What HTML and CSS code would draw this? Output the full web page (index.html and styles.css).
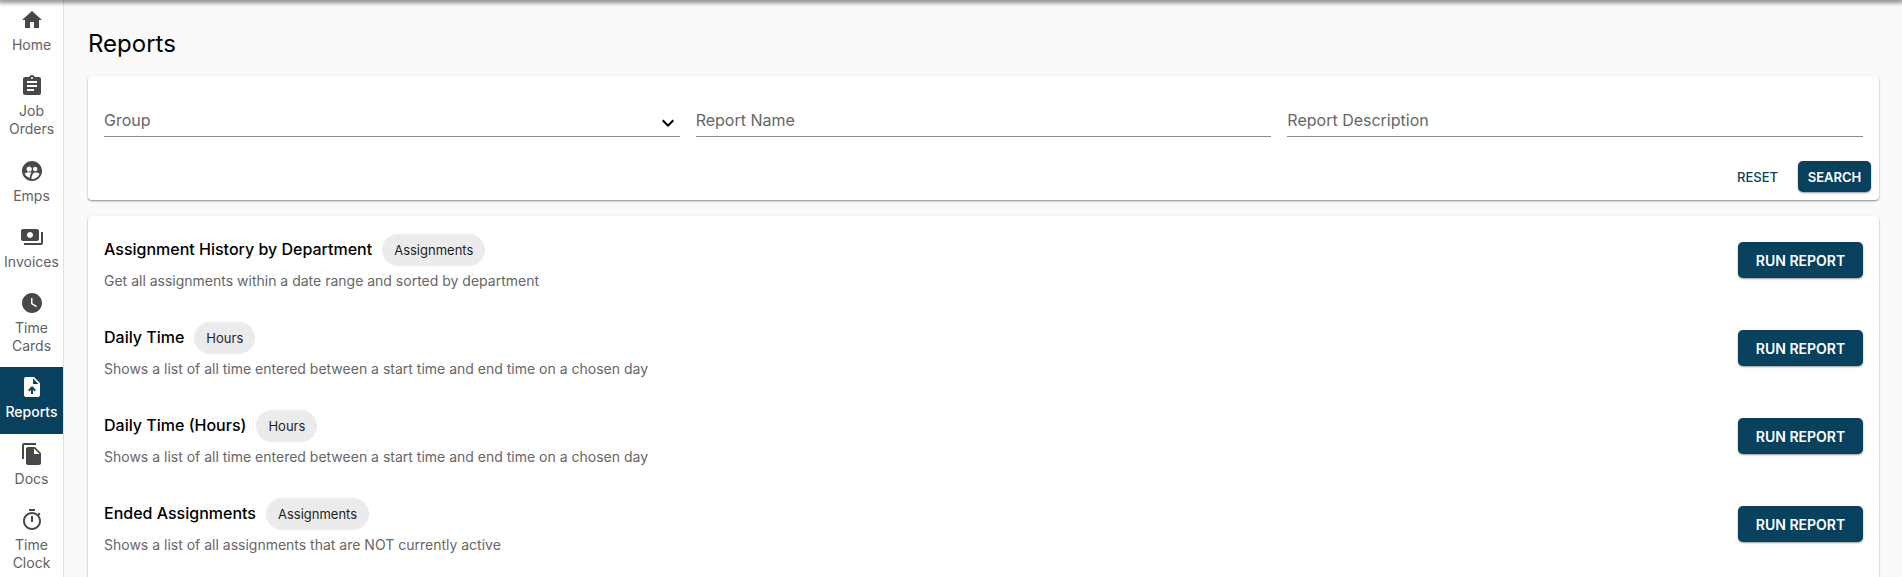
FILE: index.html
```html
<!DOCTYPE html>
<html lang="en">
<head>
    <meta charset="UTF-8">
    <title>Reports</title>
    <link rel="stylesheet" href="styles.css">
</head>
<body>
    <div class="layout">
        <nav class="sidebar">
            <a class="nav-item">
                <svg viewBox="0 0 24 24"><path d="M10 20v-6h4v6h5v-8h3L12 3 2 12h3v8z"/></svg>
                <span>Home</span>
            </a>
            <a class="nav-item">
                <svg viewBox="0 0 24 24"><path d="M19 3h-4.180C14.400 1.840 13.300 1 12 1c-1.300 0-2.400.84-2.820 2H5c-1.100 0-2 .9-2 2v14c0 1.100.9 2 2 2h14c1.100 0 2-.9 2-2V5c0-1.100-.9-2-2-2zm-7 0c.55 0 1 .45 1 1s-.45 1-1 1-1-.45-1-1 .45-1 1-1zm2 14H7v-2h7v2zm3-4H7v-2h10v2zm0-4H7V7h10v2z"/></svg>
                <span>Job Orders</span>
            </a>
            <a class="nav-item">
                <svg viewBox="0 0 24 24"><path fill-rule="evenodd" d="M12 2C6.480 2 2 6.480 2 12s4.480 10 10 10 10-4.480 10-10S17.520 2 12 2zM9.200 7.400a2.600 2.600 0 1 1 0 5.200 2.600 2.600 0 0 1 0-5.200zm6 .4a2.200 2.200 0 1 1 0 4.400 2.200 2.200 0 0 1 0-4.400zM4.600 14.800c1-1 2.700-1.500 4.600-1.500.8 0 1.600.1 2.300.4-1 1.400-1.600 3.100-1.800 5.400-2.300-.8-4.200-2.400-5.100-4.300zM12 20c-.2 0-.4 0-.6 0 .1-2.600.9-4.700 2.300-6.200 2.200-.6 4.600-.2 5.900.9-1.100 3.100-4 5.300-7.600 5.300z"/></svg>
                <span>Emps</span>
            </a>
            <a class="nav-item">
                <svg viewBox="0 0 24 24"><path d="M19 14V6c0-1.100-.9-2-2-2H3c-1.100 0-2 .9-2 2v8c0 1.100.9 2 2 2h14c1.100 0 2-.9 2-2zm-9-1c-1.660 0-3-1.340-3-3s1.340-3 3-3 3 1.340 3 3-1.340 3-3 3zm13-6v11c0 1.100-.9 2-2 2H4v-2h17V7h2z"/></svg>
                <span>Invoices</span>
            </a>
            <a class="nav-item">
                <svg viewBox="0 0 24 24"><path d="M12 2C6.500 2 2 6.500 2 12s4.500 10 10 10 10-4.500 10-10S17.500 2 12 2zm4.200 14.200L11 13V7h1.500v5.200l4.500 2.700-.8 1.300z"/></svg>
                <span>Time Cards</span>
            </a>
            <a class="nav-item active">
                <svg viewBox="0 0 24 24"><path fill-rule="evenodd" d="M14 2H6c-1.100 0-2 .9-2 2v16c0 1.100.9 2 2 2h12c1.100 0 2-.9 2-2V8l-6-6zm-1 7V3.500L18.500 9H13zm-5 6.010l1.410 1.410L11 14.840V19h2v-4.160l1.590 1.590L16 15.010 12.010 11 8 15.010z"/></svg>
                <span>Reports</span>
            </a>
            <a class="nav-item">
                <svg viewBox="0 0 24 24"><path d="M16 1H4c-1.100 0-2 .9-2 2v14h2V3h12V1zm-1 4l6 6v10c0 1.100-.9 2-2 2H7.990C6.890 23 6 22.100 6 21l.01-14c0-1.100.89-2 1.990-2h7zm-1 7h5.500L14 6.500V12z"/></svg>
                <span>Docs</span>
            </a>
            <a class="nav-item">
                <svg viewBox="0 0 24 24"><path d="M15 1H9v2h6V1zm-4 13h2V8h-2v6zm8.030-6.610l1.420-1.420c-.43-.51-.9-.99-1.410-1.410l-1.420 1.420C16.070 4.740 14.120 4 12 4c-4.970 0-9 4.030-9 9s4.020 9 9 9 9-4.030 9-9c0-2.120-.74-4.070-1.970-5.610zM12 20c-3.870 0-7-3.130-7-7s3.130-7 7-7 7 3.130 7 7-3.130 7-7 7z"/></svg>
                <span>Time Clock</span>
            </a>
        </nav>

        <main class="content">
            <h1>Reports</h1>

            <section class="card filters">
                <div class="filter-row">
                    <div class="field">
                        <span>Group</span>
                        <svg class="chevron" viewBox="0 0 24 24"><path d="M16.590 8.590L12 13.170 7.410 8.590 6 10l6 6 6-6z"/></svg>
                    </div>
                    <div class="field"><span>Report Name</span></div>
                    <div class="field"><span>Report Description</span></div>
                </div>
                <div class="filter-actions">
                    <button class="btn-text">RESET</button>
                    <button class="btn-small">SEARCH</button>
                </div>
            </section>

            <section class="card report-list">
                <div class="report">
                    <div class="report-info">
                        <div class="report-title"><span class="title-text">Assignment History by Department</span> <span class="chip">Assignments</span></div>
                        <div class="report-desc">Get all assignments within a date range and sorted by department</div>
                    </div>
                    <button class="btn-run">RUN REPORT</button>
                </div>
                <div class="report">
                    <div class="report-info">
                        <div class="report-title"><span class="title-text">Daily Time</span> <span class="chip">Hours</span></div>
                        <div class="report-desc">Shows a list of all time entered between a start time and end time on a chosen day</div>
                    </div>
                    <button class="btn-run">RUN REPORT</button>
                </div>
                <div class="report">
                    <div class="report-info">
                        <div class="report-title"><span class="title-text">Daily Time (Hours)</span> <span class="chip">Hours</span></div>
                        <div class="report-desc">Shows a list of all time entered between a start time and end time on a chosen day</div>
                    </div>
                    <button class="btn-run">RUN REPORT</button>
                </div>
                <div class="report">
                    <div class="report-info">
                        <div class="report-title"><span class="title-text">Ended Assignments</span> <span class="chip">Assignments</span></div>
                        <div class="report-desc">Shows a list of all assignments that are NOT currently active</div>
                    </div>
                    <button class="btn-run">RUN REPORT</button>
                </div>
            </section>
        </main>
    </div>
    <div class="top-shadow"></div>
</body>
</html>
```

FILE: styles.css
```css
html, body {
    height: 100%;
}

body {
    margin: 0;
    font-family: Inter, "Liberation Sans", sans-serif;
    background-color: #fafafa;
    overflow: hidden;
}

/* collapsed app bar, only its shadow is visible */
.top-shadow {
    position: absolute;
    top: 0;
    left: 0;
    right: 0;
    height: 0;
    box-shadow: 0 0 5px 2px rgba(0, 0, 0, 0.65);
}

.layout {
    display: flex;
    height: 100%;
    overflow: hidden;
}

.sidebar {
    width: 63px;
    flex-shrink: 0;
    background-color: #fff;
    border-right: 1px solid #e0e0e0;
    overflow: hidden;
}

.nav-item {
    display: flex;
    flex-direction: column;
    align-items: center;
    padding: 8px 0 12px;
    color: #616161;
    font-size: 14px;
    line-height: 1.3;
    text-align: center;
}

.nav-item svg {
    width: 24px;
    height: 24px;
    fill: #484848;
    margin-bottom: 4px;
}

.nav-item span {
    width: 60px;
}

.nav-item.active {
    background-color: #07415e;
    color: #fff;
    font-weight: 500;
}

.nav-item.active svg {
    fill: #fff;
}

.content {
    flex: 1;
    display: flex;
    flex-direction: column;
    padding: 0 23px 0 24px;
}

h1 {
    margin: 0;
    padding-top: 29px;
    height: 47px;
    font-size: 24px;
    line-height: 30px;
    font-weight: 400;
    color: #000;
}

.card {
    background-color: #fff;
    border-radius: 4px;
    box-shadow: 0 1px 2px rgba(0, 0, 0, 0.45);
}

.filters {
    height: 124px;
    flex-shrink: 0;
    box-sizing: border-box;
    padding: 24px 8px 8px 16px;
    margin-bottom: 16px;
}

.filter-row {
    display: flex;
    gap: 16px;
    padding-right: 8px;
}

.field {
    flex: 1;
    height: 37px;
    display: flex;
    align-items: center;
    justify-content: space-between;
    box-sizing: border-box;
    padding-top: 4px;
    border-bottom: 1px solid #8c8c8c;
    color: #666;
    font-size: 16px;
}

.chevron {
    width: 24px;
    height: 24px;
    margin-top: 5px;
}

.filter-actions {
    display: flex;
    justify-content: flex-end;
    align-items: center;
    gap: 10px;
    margin-top: 24px;
}

button {
    font-family: inherit;
    border: none;
    border-radius: 5px;
    cursor: pointer;
}

.btn-text {
    background: none;
    color: #07415e;
    font-size: 13px;
    font-weight: 500;
    padding: 0 10px;
    height: 31px;
}

.btn-small {
    background-color: #07415e;
    color: #fff;
    font-size: 13px;
    font-weight: 600;
    width: 73px;
    height: 31px;
    padding: 0;
    box-shadow: 0 1px 2px rgba(0, 0, 0, 0.4);
}

.report-list {
    flex: 1;
    padding: 0 16px;
    border-radius: 4px 4px 0 0;
    overflow: hidden;
}

.report {
    height: 88px;
    display: flex;
    align-items: flex-start;
    justify-content: space-between;
}

.report-info {
    padding-top: 18px;
}

.report-title {
    display: flex;
    align-items: center;
    gap: 10px;
    height: 32px;
    font-size: 16px;
    font-weight: 500;
    color: #000;
}

.title-text {
    padding-bottom: 2px;
}

.chip {
    display: inline-block;
    height: 32px;
    line-height: 32px;
    padding: 0 12px;
    border-radius: 16px;
    background-color: #ebebeb;
    font-size: 13px;
    font-weight: 400;
    color: #1f1f1f;
}

.report-desc {
    margin-top: 5px;
    font-size: 14px;
    line-height: 20px;
    color: #666;
}

.btn-run {
    margin-top: 26px;
    width: 125px;
    height: 36px;
    background-color: #07415e;
    color: #fff;
    font-size: 14px;
    font-weight: 600;
    padding: 0;
    box-shadow: 0 1px 2px rgba(0, 0, 0, 0.4);
}
```
